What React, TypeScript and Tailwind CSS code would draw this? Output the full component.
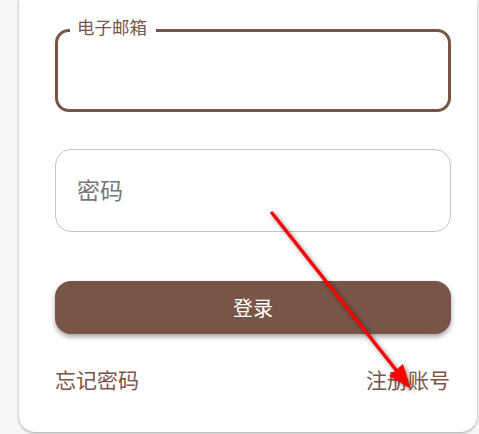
import React from "react";

const font = { fontFamily: '"Noto Sans CJK SC", "Noto Sans", sans-serif' };

function EmailField() {
  return (
    <div className="relative h-[83px] w-full rounded-[14px] border-[3px] border-[#795548]">
      {/* floating label sits on the border */}
      <span className="absolute -top-[17px] left-[12px] bg-white pl-[7px] pr-[9px] text-[17.5px] leading-[24px] text-[#795548]">
        电子邮箱
      </span>
    </div>
  );
}

function PasswordField() {
  return (
    <div className="flex h-[83px] w-full items-center rounded-[16px] border border-[#c4c4c4] pl-[21px] pb-[3px]">
      <span className="text-[23px] text-[#767676]">密码</span>
    </div>
  );
}

function Arrow() {
  return (
    <svg
      className="pointer-events-none absolute inset-0"
      width="479"
      height="434"
      viewBox="0 0 479 434"
      style={{ filter: "drop-shadow(2px 2px 2px rgba(0,0,0,0.45))" }}
    >
      <line x1="272" y1="213" x2="400" y2="375" stroke="#ff0000" strokeWidth="3.5" strokeLinecap="round" />
      <polygon points="411,389 389,376 403,364" fill="#ff0000" />
    </svg>
  );
}

export default function App() {
  return (
    <div className="relative h-[434px] w-[479px] overflow-hidden bg-[#f6f6f6]" style={font}>
      <div className="ml-[19px] h-[432px] w-[458px] rounded-b-[16px] bg-white px-[36px] pt-[29px] shadow-[0_1px_3px_rgba(0,0,0,0.35)]">
        <div className="flex w-[396px] flex-col">
          <EmailField />
          <div className="mt-[37px]">
            <PasswordField />
          </div>
          <button className="mt-[49px] flex h-[53px] w-full items-center justify-center rounded-[16px] bg-[#795548] text-[20px] text-white shadow-[0_3px_5px_rgba(0,0,0,0.35)]">
            登录
          </button>
          <div className="mt-[31px] flex items-center justify-between pr-[1px] text-[21px] leading-[28px] text-[#795548]">
            <span>忘记密码</span>
            <span>注册账号</span>
          </div>
        </div>
      </div>
      <Arrow />
    </div>
  );
}
